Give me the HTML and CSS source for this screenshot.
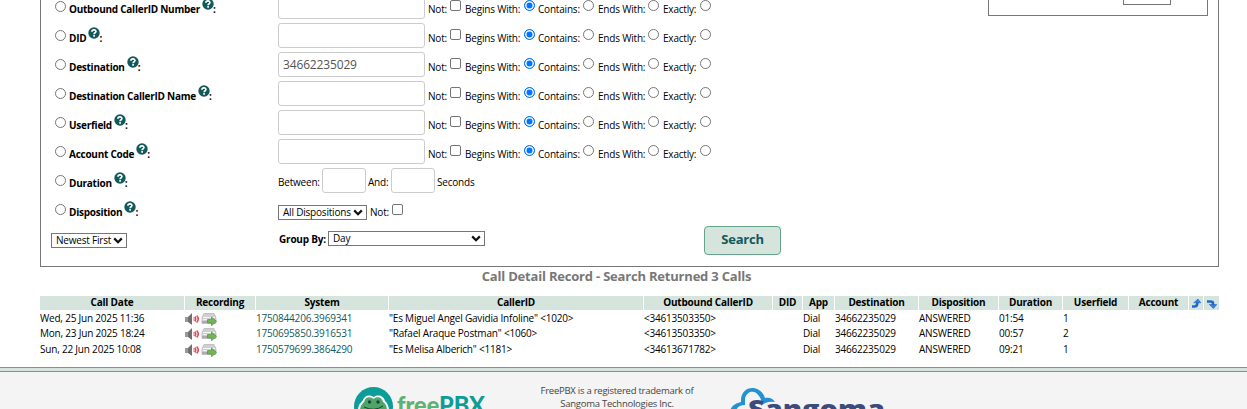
FILE: index.html
```html
<!DOCTYPE html>
<html lang="en">
<head>
<meta charset="utf-8">
<title>CDR Reports</title>
<link rel="stylesheet" href="styles.css">
</head>
<body>
<svg class="defs" aria-hidden="true">
<symbol id="help" viewBox="0 0 12 12"><circle cx="6" cy="6" r="5.700" fill="#12595a"/><path d="M3.900 4.700C4 2.300 8.100 2.400 7.900 4.700C7.800 5.800 6.100 5.800 6.100 7.300" fill="none" stroke="#fff" stroke-width="1.700"/><rect x="5.200" y="8.100" width="1.800" height="1.600" fill="#fff"/></symbol>
<symbol id="chev" viewBox="0 0 10 7"><path d="M1.2 1.4L5 5.2L8.8 1.4" fill="none" stroke="#111" stroke-width="2.200"/></symbol>
<symbol id="sound" viewBox="0 0 16 13"><path d="M0 4h3l4-4v12L3 9H0z" fill="#707070"/><path d="M0 4h3v5H0z" fill="#999"/><path d="M9 4v4" stroke="#f5a0a8" stroke-width="1.5"/><path d="M10 3.500Q11.500 6 10 8.500M11.700 2.500Q14.800 6 11.700 9.500" fill="none" stroke="#e34b58" stroke-width="1.600"/></symbol>
<symbol id="save" viewBox="0 0 16 13"><path d="M3 .5h10l2 4v6H1v-6z" fill="#d0d0d0" stroke="#aaa" stroke-width=".6"/><path d="M2 4.500h12M2 6.500h8" stroke="#f4f4f4"/><path d="M1 8h7v2H1z" fill="#aaa"/><path d="M6.500 6.500h4V4l5 4.300-5 4.400v-2.700h-4z" fill="#73b657" stroke="#4b913c" stroke-width=".7"/></symbol>
</svg>
<form class="panel">
<div class="fields">
<div class="row"><span class="name"><i class="radio"></i><b>Outbound CallerID Number</b><svg class="help"><use href="#help"/></svg><b>:</b></span><span class="input"></span><span class="match"><span>Not:</span><i class="check"></i><span>Begins With:</span><i class="radio on"></i><span>Contains:</span><i class="radio"></i><span>Ends With:</span><i class="radio"></i><span>Exactly:</span><i class="radio"></i></span></div>
<div class="row"><span class="name"><i class="radio"></i><b>DID</b><svg class="help"><use href="#help"/></svg><b>:</b></span><span class="input"></span><span class="match"><span>Not:</span><i class="check"></i><span>Begins With:</span><i class="radio on"></i><span>Contains:</span><i class="radio"></i><span>Ends With:</span><i class="radio"></i><span>Exactly:</span><i class="radio"></i></span></div>
<div class="row"><span class="name"><i class="radio"></i><b>Destination</b><svg class="help"><use href="#help"/></svg><b>:</b></span><span class="input">34662235029</span><span class="match"><span>Not:</span><i class="check"></i><span>Begins With:</span><i class="radio on"></i><span>Contains:</span><i class="radio"></i><span>Ends With:</span><i class="radio"></i><span>Exactly:</span><i class="radio"></i></span></div>
<div class="row"><span class="name"><i class="radio"></i><b>Destination CallerID Name</b><svg class="help"><use href="#help"/></svg><b>:</b></span><span class="input"></span><span class="match"><span>Not:</span><i class="check"></i><span>Begins With:</span><i class="radio on"></i><span>Contains:</span><i class="radio"></i><span>Ends With:</span><i class="radio"></i><span>Exactly:</span><i class="radio"></i></span></div>
<div class="row"><span class="name"><i class="radio"></i><b>Userfield</b><svg class="help"><use href="#help"/></svg><b>:</b></span><span class="input"></span><span class="match"><span>Not:</span><i class="check"></i><span>Begins With:</span><i class="radio on"></i><span>Contains:</span><i class="radio"></i><span>Ends With:</span><i class="radio"></i><span>Exactly:</span><i class="radio"></i></span></div>
<div class="row"><span class="name"><i class="radio"></i><b>Account Code</b><svg class="help"><use href="#help"/></svg><b>:</b></span><span class="input"></span><span class="match"><span>Not:</span><i class="check"></i><span>Begins With:</span><i class="radio on"></i><span>Contains:</span><i class="radio"></i><span>Ends With:</span><i class="radio"></i><span>Exactly:</span><i class="radio"></i></span></div>
<div class="row"><span class="name"><i class="radio"></i><b>Duration</b><svg class="help"><use href="#help"/></svg><b>:</b></span><span class="between"><span>Between:</span><span class="input"></span><span>And:</span><span class="input"></span><span>Seconds</span></span></div>
<div class="row"><span class="name"><i class="radio"></i><b>Disposition</b><svg class="help"><use href="#help"/></svg><b>:</b></span><span class="dispo"><span class="select"><span>All Dispositions</span><svg class="chev"><use href="#chev"/></svg></span><span class="not">Not:</span><i class="check"></i></span></div>
<div class="row actions"><span class="select order"><span>Newest First</span><svg class="chev"><use href="#chev"/></svg></span><b class="group">Group By:</b><span class="select day"><span>Day</span><svg class="chev"><use href="#chev"/></svg></span><button class="search" type="button">Search</button></div>
</div>
<div class="extra"><div class="extra-box"></div></div>
</form>
<h1 class="title"><span>Call Detail Record - Search Returned 3 Calls</span></h1>
<div class="cdr">
<div class="line head"><b>Call Date</b><b>Recording</b><b>System</b><b>CallerID</b><b>Outbound CallerID</b><b>DID</b><b>App</b><b>Destination</b><b>Disposition</b><b>Duration</b><b>Userfield</b><b>Account</b>
<b><svg class="arrow" viewBox="0 0 10 11"><path d="M1 8.500H3.500Q5.800 8.500 6.200 6V4" fill="none" stroke="#1c6ad0" stroke-width="2.600"/><path d="M2.700 4.800L7 1L9.800 4.800z" fill="#2c83e6" stroke="#1c58b0" stroke-width=".5"/></svg></b>
<b><svg class="arrow" viewBox="0 0 10 11"><path d="M0 3.500H3.500Q6 3.500 6 5.500V7" fill="none" stroke="#1c6ad0" stroke-width="2.600"/><path d="M2.200 6.500L6.500 10.500L9.800 6.500z" fill="#2c83e6" stroke="#1c58b0" stroke-width=".5"/></svg></b></div>
<div class="line"><span>Wed, 25 Jun 2025 11:36</span><span class="media"><svg><use href="#sound"/></svg><svg><use href="#save"/></svg></span><a>1750844206.3969341</a><span>"Es Miguel Angel Gavidia Infoline" &lt;1020&gt;</span><span>&lt;34613503350&gt;</span><span></span><span>Dial</span><span>34662235029</span><span>ANSWERED</span><span>01:54</span><span>1</span></div>
<div class="line"><span>Mon, 23 Jun 2025 18:24</span><span class="media"><svg><use href="#sound"/></svg><svg><use href="#save"/></svg></span><a>1750695850.3916531</a><span>"Rafael Araque Postman" &lt;1060&gt;</span><span>&lt;34613503350&gt;</span><span></span><span>Dial</span><span>34662235029</span><span>ANSWERED</span><span>00:57</span><span>2</span></div>
<div class="line last"><span>Sun, 22 Jun 2025 10:08</span><span class="media"><svg><use href="#sound"/></svg><svg><use href="#save"/></svg></span><a>1750579699.3864290</a><span>"Es Melisa Alberich" &lt;1181&gt;</span><span>&lt;34613671782&gt;</span><span></span><span>Dial</span><span>34662235029</span><span>ANSWERED</span><span>09:21</span><span>1</span></div>
</div>
<footer class="footer">
<svg class="pbx" viewBox="0 0 134 24"><circle cx="19.500" cy="19.500" r="19.500" fill="#0d9d98"/><path d="M4 24C4 17 7 16 9 13C11 7 17 8 20 10C24 7 30 9 31 14C34 17 35 20 35 24z" fill="#fff"/><path d="M6 24C6 18 9 17 10.500 14C12 9 17 10 19.500 12C23 9 28 10 29 15C32 17 33 20 33 24z" fill="#4fa568"/><circle cx="15.500" cy="15" r="1.700" fill="#17463a"/><circle cx="24" cy="15" r="1.700" fill="#17463a"/><path d="M10 20Q20 25 29 19" fill="none" stroke="#17463a"/><text x="43" y="27" class="pbx-word" textLength="88" lengthAdjust="spacingAndGlyphs"><tspan fill="#5db274">free</tspan><tspan fill="#0d9d98">PBX</tspan></text></svg>
<p class="legal"><span>FreePBX is a registered trademark of</span><br><span>Sangoma Technologies Inc.</span></p>
<svg class="sangoma" viewBox="0 0 160 24"><path d="M0 24C1 19 6 16 11 15C10 -3 31 -3 35 11C39 10 43 11 45 15C38 14 34 16 31 19C32 14 31 12 29 9C25 2 16 4 15 12L15 18C10 18 7 20 6 24z" fill="#2492d1"/><text x="18" y="30.500" class="sangoma-word" textLength="137" lengthAdjust="spacingAndGlyphs">Sangoma</text></svg>
</footer>
</body>
</html>
```
FILE: styles.css
```css
* { box-sizing: border-box; }
html, body { margin: 0; height: 409px; overflow: hidden; }
body { background: #fff; color: #000; font: 10px/14px "Open Sans", "Noto Sans", sans-serif; letter-spacing: -0.2px; display: flex; flex-direction: column; }
span, b, a { white-space: nowrap; }
.defs { display: none; }
svg { display: block; flex: none; }
.panel { margin: 0 28px 0 40px; height: 267px; flex: none; border: 1px solid #777; border-top: 0; display: flex; justify-content: space-between; padding: 0 10px; }
.fields { margin-top: -6px; width: 760px; }
.row { height: 29px; display: flex; align-items: flex-start; }
.name { width: 227px; padding-left: 4px; display: flex; flex: none; letter-spacing: -0.25px; }
.name b { margin-top: 8px; }
.name .radio { margin: 7px 3px 0 0; }
.help { width: 12px; height: 12px; margin: 4px -1px 0 2px; }
.radio, .check { display: block; flex: none; width: 11px; height: 11px; border: 1px solid #767676; background: #fff; }
.radio { border-radius: 50%; }
.check { border-radius: 2px; }
.on { border-color: #0075ff; background: #0075ff; box-shadow: inset 0 0 0 1.5px #fff; }
.input { display: block; flex: none; width: 147px; height: 25px; border: 1px solid #ccc; border-radius: 3px; padding-left: 4px; font-size: 12px; letter-spacing: -0.15px; line-height: 24px; color: #555; }
.match { margin: 6px 0 0 3px; display: grid; grid-template-columns: 22px 15px 59px 14px 45px 15px 50px 15px 37px 11px; }
.match > span { margin-top: 2px; }
.between { display: grid; grid-template-columns: 44px 46px 23px 46px auto; line-height: 29px; }
.between .input { width: 44px; }
.select { border: 1px solid #767676; height: 15px; display: flex; align-items: center; justify-content: space-between; padding: 0 3px 0 4px; line-height: 13px; }
.chev { width: 10px; height: 7px; }
.dispo { display: flex; padding-top: 8px; }
.dispo .select { width: 89px; }
.dispo .not { width: 22px; margin-left: 3px; }
.dispo .check { margin-top: -1px; }
.order { width: 76px; margin: 7px 152px 0 0; }
.group { width: 49px; margin-top: 6px; }
.day { width: 157px; margin-top: 5px; }
.search { margin: 0 0 0 219px; width: 77px; height: 29px; border: 1px solid #66a38b; border-radius: 4px; background: #d6e4de; color: #12595a; font: bold 13px/20px "Open Sans", sans-serif; letter-spacing: -0.2px; padding: 0 0 3px; flex: none; }
.extra { width: 220px; height: 16px; border: 1px solid #777; border-top: 0; padding-left: 134px; }
.extra-box { width: 48px; height: 5px; border: 1px solid #767676; border-top: 0; }
.title { margin: 0 0 0 -14px; height: 29px; flex: none; text-align: center; font-size: 13px; line-height: 18px; color: #777; }
.cdr { margin: 0 28px 0 40px; height: 71px; flex: none; }
.line { display: grid; grid-template-columns: 144px 70px 132px 254px 128px 29px 31px 83px 79px 63px 65px 59px 14px 15px; column-gap: 1px; height: 15px; line-height: 13px; margin: 0; }
.head { height: 14px; line-height: 13px; margin-bottom: 2px; text-align: center; }
.head b { background: #d6e4de; }
.last { margin-top: 1px; }
.line a { color: #12595a; }
.media { display: flex; padding-top: 1px; }
.media svg { width: 16px; height: 13px; }
.arrow { width: 10px; height: 11px; margin: 2px auto 0; }
.footer { height: 42px; flex: none; background: #f4f4f4; border-top: 1px solid #66a38b; box-shadow: inset 0 3px #d6e4de, inset 0 4px #66a38b; display: flex; align-items: flex-start; padding: 19px 0 0 354px; letter-spacing: 0; }
.pbx { width: 134px; height: 24px; }
.pbx-word { font: 900 24px Lato, sans-serif; }
.legal { margin: -3px 0 0 52px; width: 154px; text-align: center; font-size: 9.5px; letter-spacing: -0.25px; line-height: 13px; color: #444; }
.sangoma { width: 160px; height: 24px; margin-left: 36px; }
.sangoma-word { font: 800 24px "Open Sans", sans-serif; fill: #3c4b7d; }
```
